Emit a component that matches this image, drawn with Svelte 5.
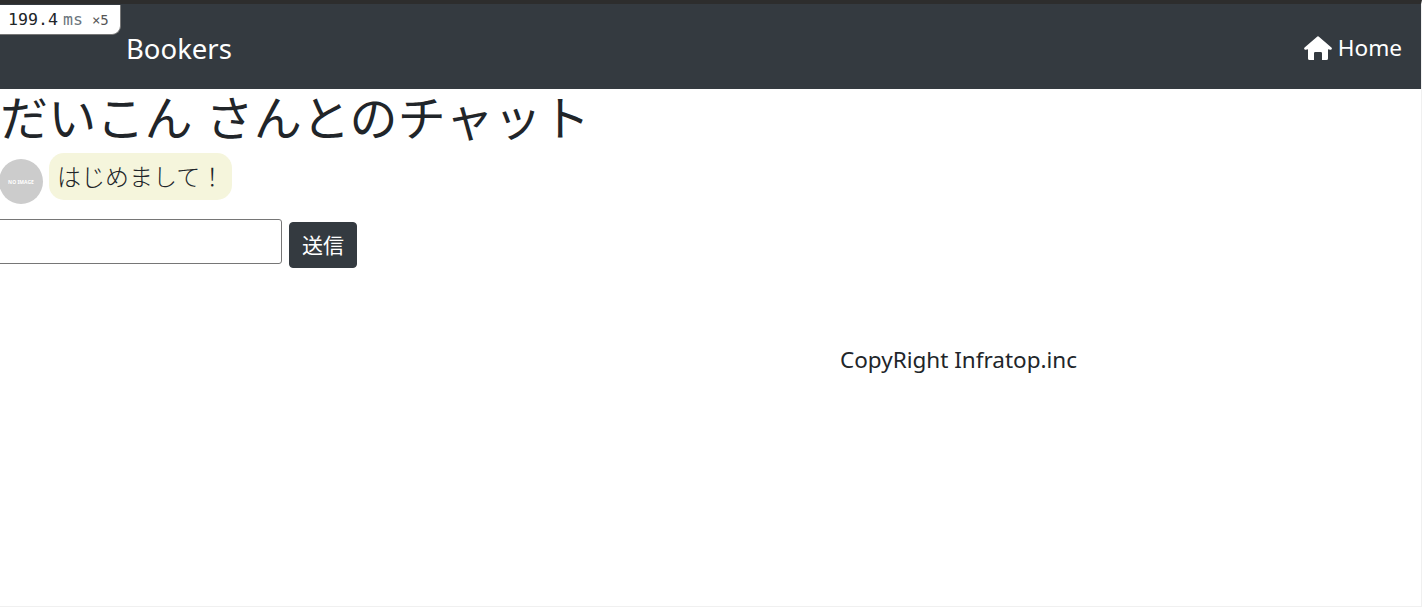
<script>
  const title = 'だいこん さんとのチャット';
</script>

<div class="page">
  <div class="timer"><span class="num">199.4</span><span class="unit">ms</span><span class="times">×5</span></div>
  <header class="navbar">
    <span class="brand">Bookers</span>
    <a class="home" href="#top">
      <svg viewBox="0 0 28 24" width="28" height="24" aria-hidden="true"><path fill="currentColor" d="M14 0.3 Q14.6 0.3 15.2 0.9 L27.4 11.4 Q28.4 12.4 27.4 13.4 Q26.8 14 25 13.6 L24 13.2 V22.4 Q24 24 22.4 24 H18 V17.2 Q18 16 16.8 16 H11.2 Q10 16 10 17.2 V24 H5.6 Q4 24 4 22.4 V13.2 L3 13.6 Q1.2 14 0.6 13.4 Q-0.4 12.4 0.6 11.4 L12.8 0.9 Q13.4 0.3 14 0.3 Z"/></svg>
      Home
    </a>
  </header>
  <main>
    <h1>{title}</h1>
    <div class="message">
      <div class="avatar"><span>NO IMAGE</span></div>
      <p class="bubble">はじめまして！</p>
    </div>
    <form class="send" onsubmit={(e) => e.preventDefault()}>
      <input type="text" aria-label="メッセージ" />
      <button type="submit">送信</button>
    </form>
  </main>
  <footer>CopyRight Infratop.inc</footer>
</div>

<style>
  :global(body) {
    margin: 0;
    background: #fff;
    color: #212529;
    font-family: "Noto Sans", "Noto Sans CJK JP", sans-serif;
  }
  .page {
    position: relative;
    box-sizing: border-box;
    height: 607px;
    border-top: 4px solid #2d2d2d;
    border-right: 1px solid #f0f0f0;
    border-bottom: 1px solid #f0f0f0;
    overflow: hidden;
  }
  .timer {
    position: absolute;
    top: 1px;
    left: 0;
    box-sizing: border-box;
    width: 121px;
    height: 30px;
    padding: 5px 0 0 8px;
    background: #fff;
    border-right: 1px solid #777;
    border-bottom: 1px solid #777;
    border-bottom-right-radius: 9px;
    font-family: "DejaVu Sans Mono", monospace;
    font-size: 16.6px;
    line-height: 20px;
    white-space: nowrap;
  }
  .unit { margin-left: 5px; color: #6c757d; }
  .times { margin-left: 9px; font-size: 14px; color: #555; }
  .navbar {
    display: flex;
    align-items: center;
    justify-content: space-between;
    box-sizing: border-box;
    height: 85px;
    padding: 4px 19px 0 126px;
    background: #343a40;
    color: #fff;
  }
  .brand { font-size: 27.5px; line-height: 1.5; }
  .home {
    display: flex;
    align-items: center;
    gap: 6px;
    margin-top: -2px;
    color: #fff;
    text-decoration: none;
    font-size: 22.6px;
  }
  h1 {
    margin: 0;
    font-size: 48px;
    font-weight: 400;
    letter-spacing: 0.2px;
    line-height: 57px;
    white-space: nowrap;
  }
  .message {
    display: flex;
    align-items: center;
    gap: 5px;
    margin-top: 2px;
  }
  .avatar {
    display: flex;
    align-items: center;
    justify-content: center;
    width: 44px;
    height: 45px;
    margin-left: -1px;
    margin-top: 11px;
    border-radius: 50%;
    background: #ccc;
    color: #fff;
  }
  .avatar span { font-size: 5px; font-weight: 700; white-space: nowrap; }
  .bubble {
    box-sizing: border-box;
    height: 47px;
    margin: 0 0 0 1px;
    padding: 0 8px 0 8px;
    border-radius: 15px;
    background: beige;
    font-size: 24px;
    font-weight: 300;
    line-height: 47px;
    white-space: nowrap;
  }
  .send {
    display: flex;
    align-items: flex-start;
    gap: 7px;
    margin-top: 15px;
  }
  input {
    box-sizing: border-box;
    width: 286px;
    height: 45px;
    margin-left: -4px;
    padding: 0;
    border: 1px solid #767676;
    border-radius: 3px;
    background: #fff;
  }
  button {
    box-sizing: border-box;
    width: 68px;
    height: 46px;
    margin-top: 3px;
    padding: 0 0 2px;
    border: 1px solid #343a40;
    border-radius: 4px;
    background: #343a40;
    color: #fff;
    font-family: inherit;
    font-size: 21px;
  }
  footer {
    margin: 75px 0 0 840px;
    font-size: 22.5px;
    line-height: 33px;
    white-space: nowrap;
  }
</style>
